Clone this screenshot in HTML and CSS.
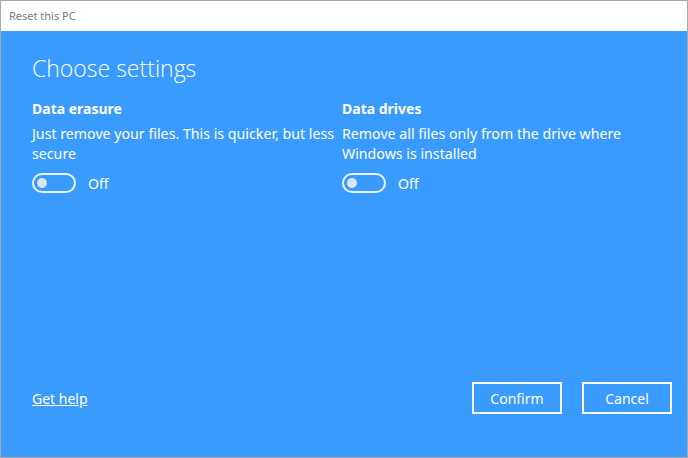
FILE: index.html
```html
<!DOCTYPE html>
<html lang="en">
<head>
    <meta charset="UTF-8">
    <title>Reset this PC</title>
    <link rel="stylesheet" href="styles.css">
</head>
<body>
    <div class="window">
        <div class="titlebar">Reset this PC</div>
        <div class="content">
            <h1>Choose settings</h1>
            <div class="options">
                <div class="option">
                    <h2>Data erasure</h2>
                    <p>Just remove your files. This is quicker, but less secure</p>
                    <div class="toggle-row">
                        <span class="toggle"><span class="knob"></span></span>
                        <span class="state">Off</span>
                    </div>
                </div>
                <div class="option">
                    <h2>Data drives</h2>
                    <p>Remove all files only from the drive where Windows is installed</p>
                    <div class="toggle-row">
                        <span class="toggle"><span class="knob"></span></span>
                        <span class="state">Off</span>
                    </div>
                </div>
            </div>
            <div class="footer">
                <a href="#" class="help">Get help</a>
                <div class="buttons">
                    <button>Confirm</button>
                    <button>Cancel</button>
                </div>
            </div>
        </div>
    </div>
</body>
</html>
```

FILE: styles.css
```css
html, body { margin: 0; padding: 0; }
body { font-family: "Noto Sans", "Open Sans", sans-serif; background: #fff; }
.window { width: 686px; height: 456px; border: 1px solid #a9a9a9; display: flex; flex-direction: column; }
.titlebar { height: 30px; background: #fff; color: #7a7a7a; font-size: 11px; padding-left: 8px; line-height: 29px; }
.content { flex: 1; background: #3a9bff; color: #fff; padding: 0 31px; display: flex; flex-direction: column; }
h1 { font-family: "Open Sans", sans-serif; font-weight: 300; font-size: 23px; margin: 22px 0 0; line-height: 30px; }
.options { display: grid; grid-template-columns: 310px 310px; margin-top: 16px; }
h2 { font-size: 14px; font-weight: 700; margin: 0; line-height: 20px; }
.option p { font-size: 14.2px; line-height: 20px; margin: 5px 0 0; }
.toggle-row { display: flex; align-items: center; margin-top: 9px; }
.toggle { box-sizing: border-box; width: 44px; height: 20px; border: 2px solid rgba(255,255,255,0.9); border-radius: 10px; display: flex; align-items: center; padding-left: 3px; }
.knob { width: 10px; height: 10px; border-radius: 50%; background: #dde6f2; }
.state { font-size: 14px; margin-left: 12px; }
.footer { margin-top: auto; margin-bottom: 43px; display: flex; justify-content: space-between; align-items: center; }
.help { color: #fff; font-size: 14px; }
.buttons { display: flex; gap: 20px; margin-right: -16px; }
button { width: 90px; height: 32px; background: transparent; border: 2px solid #fff; color: #fff; font-family: "Noto Sans", sans-serif; font-size: 14px; }
```
